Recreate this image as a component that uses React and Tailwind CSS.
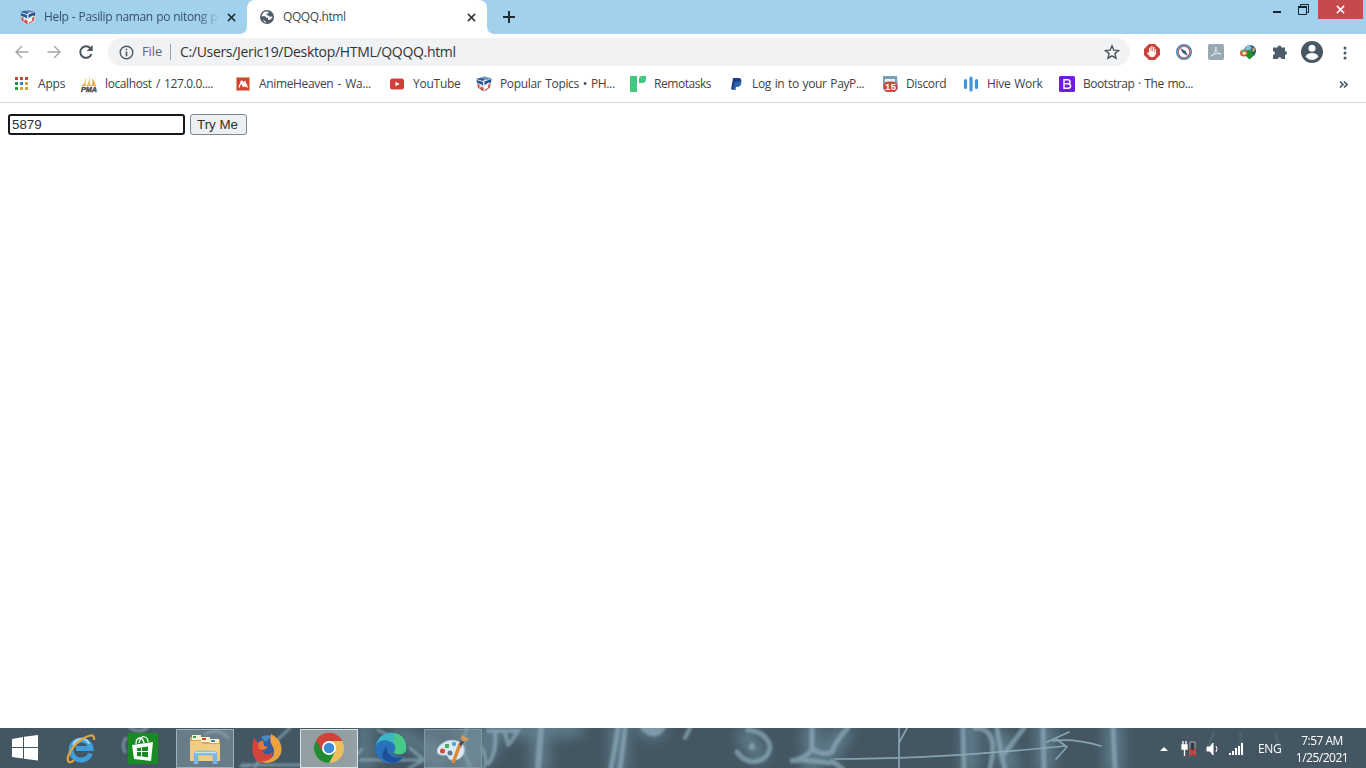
import React from "react";

const CloseX = ({ className }) => (
  <svg viewBox="0 0 10 10" className={className} fill="none" stroke="currentColor" strokeWidth="1.7">
    <path d="M1 1l8 8M9 1L1 9" />
  </svg>
);

const CubeIcon = () => (
  <svg viewBox="0 0 16 16" className="size-4">
    <path d="M0 3L9 0l7 2.500-1.500 9.500L8 16l-6-4z" fill="#dfe7ef" />
    <path d="M0 3l5-1.500 5 1.200L7 5z" fill="#31659f" />
    <path d="M8 .5l7.500 2L11 4 6 2z" fill="#6d93bd" />
    <path d="M.5 4l6.500 2v3.500L4.500 8 1 7z" fill="#2b5798" />
    <path d="M1.200 8l2.300.7V13L2 12z" fill="#cf4a3d" />
    <path d="M5 10.500l2.500 1.500v3.500L4 13z" fill="#cf4a3d" />
    <path d="M8.500 5.500L15.500 3l-.7 4-2.300-.6-4 2.600z" fill="#234f93" />
    <path d="M9 10l3-2-.5 3-3 3z" fill="#fff" />
    <path d="M12.500 8.500l2-1-.7 4-4.800 3.500v-1.500l3-1.500z" fill="#cf4a3d" />
  </svg>
);

const GlobeIcon = () => (
  <svg viewBox="0 0 16 16" className="size-4">
    <circle cx="8" cy="8" r="7" fill="#4d5b69" />
    <path d="M9.500 2.800C6 1.500 2.800 4 2.600 7.300h3.200q1.500 0 1.500 1.500H9v2h1.800l2.300-1.500c.2-.6.3-1 .2-1.800h-2.500q-1.500 0-1.500-1.300H7.600V4.500h1.900z" fill="#fff" />
    <path d="M4 10.500l3.500 3-1 .3q-2-1-2.500-3.300z" fill="#fff" />
  </svg>
);

const AppsIcon = () => (
  <svg viewBox="0 0 16 16" className="size-4">
    <path d="M1 1h3v3H1zM6 1h3v3H6zM11 1h3v3h-3z" fill="#c4453c" />
    <path d="M1 6h3v3H1zM1 11h3v3H1z" fill="#2d9148" />
    <path d="M6 6h3v3H6z" fill="#3d7fc8" />
    <path d="M11 6h3v3h-3zM6 11h3v3H6zM11 11h3v3h-3z" fill="#d9a03e" />
  </svg>
);

const PmaIcon = () => (
  <svg viewBox="0 0 16 16" className="size-4 overflow-visible">
    <path d="M1 10Q4 7 5 2v8zM5.500 10Q8.500 6 8.500 0l1 10zM10 10q2-3 1-8 3 4 4 8z" fill="#eda53f" />
    <path d="M5 3l-1 7M8.500 1L8 10M11 3l1 7" stroke="#f7d99c" strokeWidth=".8" />
    <text x="0" y="15.500" fontSize="6.500" fontWeight="bold" fontStyle="italic" fontFamily="Liberation Sans, sans-serif" fill="#4c5054" stroke="#4c5054" strokeWidth=".4" textLength="16" lengthAdjust="spacingAndGlyphs">PMA</text>
  </svg>
);

const AnimeIcon = () => (
  <svg viewBox="0 0 16 16" className="size-4">
    <path d="M1 1h14v14H1z" fill="#e5a476" />
    <path d="M2 2h12v12H2z" fill="#cf4435" />
    <path d="M4 11.500l2.300-6 2 5.500-1-6 3 6-.6-6 2.800 6.500" fill="none" stroke="#fff" strokeWidth="1.300" />
  </svg>
);

const YoutubeIcon = () => (
  <svg viewBox="0 0 16 16" className="size-4">
    <rect x="1" y="2.500" width="14" height="11" rx="2.500" fill="#d14038" />
    <path d="M6.500 5.700v4.600l4-2.300z" fill="#fff" />
  </svg>
);

const RemotasksIcon = () => (
  <svg viewBox="0 0 16 16" className="size-4">
    <path d="M0 0h7v16H0z" fill="#42c883" />
    <path d="M9 7V3q0-3 3-3h4v3q0 4-4 4z" fill="#42c883" />
  </svg>
);

const PaypalIcon = () => (
  <svg viewBox="0 0 16 16" className="size-4">
    <path d="M5 2h5c3 0 4 2 3 4.500C12.300 9 10.500 10 8 10H7l-.7 3.500H3z" fill="#253b80" />
    <path d="M12.800 5c.8 1 .6 2.500 0 3.800-.8 1.600-2.300 2.200-4 2.200H8l-.5 3H5l.6-3.500L6.500 6z" fill="#2865b0" />
  </svg>
);

const DiscordIcon = () => (
  <svg viewBox="0 0 16 16" className="size-4">
    <path d="M1 0h14l1 13-3 3H4l-3-3z" fill="#7b9fb7" />
    <path d="M3 3h10v3H3z" fill="#eef3f7" />
    <rect x="1.500" y="5.500" width="14" height="10.500" rx="5" fill="#d44538" />
    <text x="3" y="14.300" fontSize="9.500" fontWeight="bold" fontFamily="Liberation Sans, sans-serif" fill="#fff" textLength="11">15</text>
  </svg>
);

const HiveIcon = () => (
  <svg viewBox="0 0 16 16" className="size-4">
    <path d="M2.500 4.500v7M8 2v12M13.500 4.500v7" stroke="#4195d6" strokeWidth="3.200" strokeLinecap="round" />
  </svg>
);

const BootstrapIcon = () => (
  <svg viewBox="0 0 16 16" className="size-4">
    <rect width="16" height="16" rx="1.500" fill="#701be0" />
    <path d="M5 3.700h3.700q2.300 0 2.300 2 0 2-2.300 2H5h4q2.600 0 2.600 2.300T9 12.300H5z" fill="none" stroke="#fff" strokeWidth="1.400" />
  </svg>
);

const bookmarks = [
  { icon: AppsIcon, label: "Apps", width: "w-[67px]", text: "tracking-[-0.2px]" },
  { icon: PmaIcon, label: "localhost / 127.0.0....", width: "w-[154px]", text: "tracking-[-0.4px] [word-spacing:1.5px]" },
  { icon: AnimeIcon, label: "AnimeHeaven - Wa...", width: "w-[154px]", text: "tracking-[-0.35px] [word-spacing:1.5px]" },
  { icon: YoutubeIcon, label: "YouTube", width: "w-[87px]", text: "tracking-[-0.25px]" },
  { icon: CubeIcon, label: "Popular Topics • PH...", width: "w-[154px]", text: "tracking-[-0.35px] [word-spacing:1.2px]" },
  { icon: RemotasksIcon, label: "Remotasks", width: "w-[98px]", text: "tracking-[-0.45px]" },
  { icon: PaypalIcon, label: "Log in to your PayP...", width: "w-[154px]", text: "tracking-[-0.37px] [word-spacing:1px]" },
  { icon: DiscordIcon, label: "Discord", width: "w-[81px]", text: "tracking-[-0.35px]" },
  { icon: HiveIcon, label: "Hive Work", width: "w-[96px]", text: "tracking-[-0.3px] [word-spacing:1px]" },
  { icon: BootstrapIcon, label: "Bootstrap · The mo...", width: "w-[150px]", text: "tracking-[-0.45px] [word-spacing:1px]" },
];

const TabStrip = () => (
  <div className="flex h-[34px] bg-[#a2d1ed]">
    <div className="flex w-[247px] items-center pl-5">
      <CubeIcon />
      <span className="ml-2 w-[175px] overflow-hidden whitespace-nowrap text-xs tracking-[-0.35px] text-[#34506b] [mask-image:linear-gradient(to_right,#000_88%,transparent)] [word-spacing:0.5px]">
        Help - Pasilip naman po nitong pr
      </span>
      <CloseX className="ml-2 size-[9px] text-[#25323d]" />
    </div>
    <div className="relative flex w-[240px] items-center rounded-t-lg bg-white pl-3">
      <svg viewBox="0 0 8 8" className="absolute -left-2 bottom-0 size-2"><path d="M8 0v8H0q8 0 8-8" fill="#fff" /></svg>
      <svg viewBox="0 0 8 8" className="absolute -right-2 bottom-0 size-2"><path d="M0 0v8h8q-8 0-8-8" fill="#fff" /></svg>
      <GlobeIcon />
      <span className="ml-2 w-[184px] text-xs tracking-[-0.4px] text-[#44484c]">QQQQ.html</span>
      <CloseX className="size-[9px] text-[#303438]" />
    </div>
    <svg viewBox="0 0 12 12" className="mt-[11px] ml-4 size-3" stroke="#202c35" strokeWidth="2"><path d="M6 0v12M0 6h12" /></svg>
    <div className="ml-auto flex">
      <div className="mt-[11px] mr-[17px] h-0.5 w-2 bg-[#17222b]" />
      <svg viewBox="0 0 11 11" className="mt-1 mr-[9px] size-[11px]" fill="none" stroke="#17222b">
        <path d="M2.500 2.500v-2h8v8h-2M.5 3.500h8v7h-8z" /><path d="M0 3h9" strokeWidth="2" />
      </svg>
      <div className="mr-[3px] flex h-[19px] w-[45px] items-center justify-center bg-[#c44a4b] text-white">
        <CloseX className="size-[9px]" />
      </div>
    </div>
  </div>
);

const Toolbar = () => (
  <div className="flex h-9 items-center pl-[14px]">
    <svg viewBox="0 0 16 16" className="size-4" fill="none" stroke="#a2a5a9" strokeWidth="1.400"><path d="M14.500 8H2M8 2L2 8l6 6" /></svg>
    <svg viewBox="0 0 16 16" className="ml-4 size-4" fill="none" stroke="#a2a5a9" strokeWidth="1.400"><path d="M1.500 8H14M8 2l6 6-6 6" /></svg>
    <svg viewBox="0 0 16 16" className="ml-4 size-4" fill="none" stroke="#4d565e" strokeWidth="2">
      <path d="M13.500 10A5.800 5.800 0 1 1 12.500 4.300" /><path d="M14.700 1v6h-6z" fill="#4d565e" stroke="none" />
    </svg>
    <div className="ml-[14px] flex h-7 w-[1022px] items-center rounded-full bg-[#f0f2f4] pr-[10px] pl-[11px]">
      <svg viewBox="0 0 16 16" className="size-[15px]" fill="none" stroke="#505a63" strokeWidth="1.500">
        <circle cx="8" cy="8" r="6.700" /><path d="M8 7v5M8 4v1.700" strokeWidth="1.700" />
      </svg>
      <span className="ml-2 w-[28px] text-[13px] tracking-[-0.1px] text-[#62686e]">File</span>
      <div className="h-4 w-px bg-[#9da2a6]" />
      <span className="ml-[9px] text-sm tracking-[-0.32px] text-[#303439]">C:/Users/Jeric19/Desktop/HTML/QQQQ.html</span>
      <svg viewBox="0 0 16 16" className="ml-auto size-4" fill="none" stroke="#4d565e" strokeWidth="1.400">
        <path d="M8 1.800l1.800 4.300 4.700.4-3.600 3.100 1.100 4.600L8 11.800l-4 2.400 1.100-4.600-3.600-3.100 4.700-.4z" />
      </svg>
    </div>
    <div className="ml-[14px] flex items-center gap-4">
      <svg viewBox="0 0 16 16" className="size-4 shrink-0">
        <path d="M5 0h6l5 5v6l-5 5H5l-5-5V5z" fill="#c9423b" />
        <path d="M5 5v4L4 8l-1 1 3 4h4l2-3V5h-1v3h-.6V3H9v4h-.6V2H7.300v5h-.6V3.500H5.500z" fill="#fff3ec" />
      </svg>
      <svg viewBox="0 0 16 16" className="size-4 shrink-0">
        <circle cx="8" cy="8" r="7.200" fill="#fff" stroke="#4586c0" strokeWidth="1.600" />
        <circle cx="8" cy="8" r="5.800" fill="none" stroke="#b8595c" strokeWidth="1.200" />
        <path d="M4 4l5.500 3L12 12 6.800 9z" fill="#425875" />
      </svg>
      <svg viewBox="0 0 16 16" className="size-4 shrink-0">
        <rect width="16" height="16" rx="2" fill="#99a9b3" />
        <path d="M3 12c3-1 5-4 5-9-1 3 1 6 5 7-3-1-6-.5-10 2z" fill="none" stroke="#e5ebef" strokeWidth="1" />
      </svg>
      <svg viewBox="0 0 16 16" className="size-4 shrink-0">
        <circle cx="10" cy="7" r="6" fill="#294f74" />
        <path d="M6 2l4-1 2 3-3 3-4-1z" fill="#83bdd8" />
        <ellipse cx="4" cy="9" rx="4" ry="3.500" fill="#d35a38" />
        <ellipse cx="3.500" cy="7.500" rx="2.700" ry="1.500" fill="#5fae6b" />
        <ellipse cx="4.300" cy="9.300" rx="2" ry="1.500" fill="#f2e6b9" />
        <path d="M7.500 6h4.500v4h3.500L9.500 15.500 5 11h2.500z" fill="#218f2b" />
        <path d="M13 3l2 2-1 3-2-1z" fill="#c4a959" />
      </svg>
      <svg viewBox="0 0 16 16" className="size-4 shrink-0">
        <path d="M1 3.500h4.500a2 2 0 1 1 4 0H13V7a2 2 0 1 1 0 4v4H9.500a1.800 1.800 0 0 0-3.600 0H1v-4a1.900 1.900 0 0 0 0-3.800z" fill="#4d5d6b" />
      </svg>
    </div>
    <svg viewBox="0 0 22 22" className="ml-[13px] size-[22px] shrink-0">
      <circle cx="11" cy="11" r="11" fill="#475764" />
      <circle cx="11" cy="7.200" r="3.500" fill="#fff" />
      <path d="M4.500 15.500c1-2.400 4-3.500 6.500-3.500s5.500 1.100 6.500 3.500c-3.500 4.500-9.500 4.500-13 0z" fill="#fff" />
    </svg>
    <svg viewBox="0 0 4 14" className="-mb-px ml-[20px] h-[14px] w-1" fill="#475764">
      <circle cx="2" cy="2" r="1.500" /><circle cx="2" cy="7" r="1.500" /><circle cx="2" cy="12" r="1.500" />
    </svg>
  </div>
);

const BookmarkBar = () => (
  <div className="flex h-[33px] items-center border-b border-[#d5d7da] pb-1 pl-[14px]">
    {bookmarks.map(({ icon: Icon, label, width, text }) => (
      <div key={label} className={`flex shrink-0 items-center gap-2 ${width}`}>
        <Icon />
        <span className={`whitespace-nowrap text-xs text-[#3e4246] ${text}`}>{label}</span>
      </div>
    ))}
    <svg viewBox="0 0 9 7" className="mr-[18px] ml-auto h-[7px] w-[9px]" fill="none" stroke="#475764" strokeWidth="1.600">
      <path d="M1 .5l3 3-3 3M5 .5l3 3-3 3" />
    </svg>
  </div>
);

const Chalkboard = () => (
  <svg viewBox="0 0 1366 40" className="absolute inset-0 h-10 w-full" fill="none" strokeLinecap="round">
    <defs>
      <filter id="chalk" x="-20%" y="-50%" width="140%" height="200%"><feGaussianBlur stdDeviation="1.200" /></filter>
      <filter id="dust" x="-20%" y="-50%" width="140%" height="200%"><feGaussianBlur stdDeviation="7" /></filter>
    </defs>
    <g filter="url(#dust)" stroke="#6d8e9f" strokeWidth="18" opacity=".7">
      <path d="M492 0l-4 25M505 0h70M540 0v40M619 0v40M645 0l12 2M746 8l12 18M812 0v40M830 25l12-20M970 0v40M1000 10l10 28M1045 0v40M1114 0v40" />
      <path d="M365 0v40M400 5l40 25M470 0v40" opacity=".8" />
    </g>
    {/* wide smudged strokes */}
    <g filter="url(#chalk)" stroke="#8eabba" opacity=".7">
      <path d="M488 3h30l-8 12M495 5q2 20-7 31M505 5l3 12" strokeWidth="4" />
      <path d="M482 20q6 10 2 20" strokeWidth="3" />
      <path d="M541 0l-3 40" strokeWidth="6" />
      <path d="M618 0q-3 20-7 40M625 0q-2 20-5 40" strokeWidth="5" />
      <path d="M646-2q8 9 14 0" strokeWidth="12" />
      <path d="M690 0l-5 10" strokeWidth="4" />
      <path d="M748 2q18 2 22 16c0 16-22 22-33 6" strokeWidth="5" />
      <path d="M752 18v1" strokeWidth="6" />
      <path d="M812 0v22q-7 9-22 11 18-2 40 2M848 0q-12 12-16 24-8 4-18-2M832 33l12 9" strokeWidth="5" />
      <path d="M963 0l1 40M975 0q25 0 15 40M997 0l4 25 5 20M1024 0l-20 26M1043 0l1 40M1113 0l2 40" strokeWidth="5" />
      <path d="M126 10q-5 7-1 14M130 0q10 6 17 0M205 6q14-7 23 4M241 38h8" strokeWidth="3" />
      <path d="M290 0l-18 17M242 37h58M262 25l-7 15" strokeWidth="3" />
      <path d="M357 27l5-6M360 32h60M410 20l14 12-15 8M378 2l10 5M467 0q-8 20 4 40" strokeWidth="3" />
      <path d="M1214 4l-8 20M1240 4l3 22M1275 6l7 20" strokeWidth="2" opacity=".35" />
    </g>
    <g stroke="#8eacb9" strokeWidth="1.700" opacity=".9">
      <path d="M835 31q100 0 231-13M899 0v40M907 0l-8 15M1056 11l11 8-11 12M1053 13q20-3 48 5M1047 14l22-10" />
    </g>
  </svg>
);

const apps = [
  {
    name: "ie",
    icon: (
      <svg viewBox="0 0 32 32" className="size-8">
        <path d="M25.500 21.500A10 10 0 1 1 26 16.500H11" fill="none" stroke="#3f9edb" strokeWidth="5" />
        <path d="M8 13q3-7 10-6 5 1 6 5" fill="none" stroke="#9ddcf8" strokeWidth="2" />
        <path d="M29 8c1-7-6-5-13 0C6 15 0 27 4 30q2 1 5-2" fill="none" stroke="#e5a33f" strokeWidth="2.200" />
      </svg>
    ),
  },
  {
    name: "store",
    icon: (
      <svg viewBox="0 0 30 32" className="h-8 w-[30px]">
        <path d="M0 1h30v31H0z" fill="#188b24" />
        <path d="M8 12q0-6 4-6 3 0 4 5M11 11q2-8 6-6 3 1 3 5" fill="none" stroke="#fff" strokeWidth="1.300" />
        <path d="M4 13l21-3-2 19-17-2z" fill="#fff" />
        <path d="M9 16l4-.5V19H9zM14 15.300l6-.8V19h-6zM9 20h4v4.500L9 24zM14 20h6v5.300l-6-.8z" fill="#188b24" />
      </svg>
    ),
  },
  {
    name: "explorer",
    frame: "border-[#a0b0b9] bg-[#8fa3af]/50",
    icon: (
      <svg viewBox="0 0 32 32" className="size-8">
        <path d="M1 5h9l2 3h19v20H1z" fill="#d7a75c" />
        <path d="M3 3h9v5H3zM12 5h9v5h-9zM20 7h10v4H20z" fill="#fff1cc" />
        <path d="M4 4h3v2H4z" fill="#3c9751" /><path d="M13 6h4v2h-4z" fill="#cf4639" /><path d="M22 8h4v2h-4z" fill="#398ac0" />
        <path d="M1 9h10l3 3h17v17H1z" fill="#f1cc83" />
        <path d="M7 32V23q0-2 2-2h15q2 0 2 2v9" fill="none" stroke="#78b6e5" strokeWidth="4.500" />
        <path d="M6 20.500h21" stroke="#c5e5f7" strokeWidth="1.500" />
      </svg>
    ),
  },
  {
    name: "firefox",
    icon: (
      <svg viewBox="0 0 32 32" className="size-8">
        <circle cx="16" cy="17" r="13" fill="#315d9f" />
        <path d="M10 5q4-3 10-1l-5 6z" fill="#4b8ac5" />
        <path d="M3 6l4 5 5-3 1 6 4 1-4 3-2-1q1 7 8 5l3-3-2 9-8 3C5 31-2 22 3 6z" fill="#d4463b" />
        <path d="M20 2q8 4 10 11c3 11-6 18-15 18l-5-2c7 1 13-3 13-9 1-6-6-8-3-18z" fill="#eda23d" />
        <path d="M7 11l5-3 1 6 4 1-4 3-5-1z" fill="#e37b36" />
      </svg>
    ),
  },
  {
    name: "chrome",
    frame: "border-[#dce2e5] bg-[#a5b0b3]/80",
    icon: (
      <svg viewBox="0 0 32 32" className="size-8">
        <circle cx="16" cy="16" r="15" fill="#edc05c" />
        <path d="M16 16L3 8.500A15 15 0 0 0 16 31l6-11z" fill="#218b34" />
        <path d="M3 8.500A15 15 0 0 1 29.500 9H16l-6.500 10z" fill="#cf4338" />
        <circle cx="16" cy="16" r="7" fill="#fff" /><circle cx="16" cy="16" r="5.300" fill="#3b8ed4" />
      </svg>
    ),
  },
  {
    name: "edge",
    icon: (
      <svg viewBox="0 0 32 32" className="size-8">
        <circle cx="16" cy="16" r="15.500" fill="#2873ba" />
        <path d="M1 13C4 2 15-2 24 3c7 4 9 12 6 17-3 3-8 4-12 1 3-3 4-9-2-11C10 7 4 8 1 13z" fill="#3ab7c5" />
        <path d="M20 1c10 2 13 13 10 19-3 3-8 4-12 1 3-3 4-7 0-10z" fill="#48ca86" />
        <path d="M12 14c-1 10 7 13 16 11q-8 9-17 4-8-5 1-15z" fill="#204f98" />
        <path d="M16 16q1 6 8 6.500 4 0 7-2.500l-1 4q-13 3-14-8z" fill="#485d68" />
      </svg>
    ),
  },
  {
    name: "paint",
    frame: "border-[#8097a4] bg-[#8099a6]/50",
    icon: (
      <svg viewBox="0 0 32 32" className="size-8">
        <path d="M6 11C13 6 24 8 27 15c2 10-6 14-13 13-4-1-2-4-5-5-5 1-10-1-9-5q1-4 6-7z" fill="#dceaf3" stroke="#a6c6dc" />
        <circle cx="5.500" cy="19" r="2.500" fill="#cf4e3c" /><path d="M8 12h4v4H8z" fill="#4fa967" />
        <circle cx="17" cy="12" r="2.200" fill="#55a6d7" /><circle cx="13" cy="21" r="2.500" fill="#5d7890" />
        <circle cx="23" cy="14" r="2" fill="#8b72a8" />
        <path d="M23 12l-7 19" stroke="#dc8a35" strokeWidth="3.500" />
        <path d="M26 9l-3 4" stroke="#4b4f55" strokeWidth="3" />
        <path d="M25 3q3 2 7 4-2 3-7 2-2-3 0-6z" fill="#d69a54" />
      </svg>
    ),
  },
];

const Taskbar = () => (
  <div className="relative h-10 overflow-hidden bg-[#435661] text-white">
    <Chalkboard />
    <div className="relative flex h-10 items-center">
      <svg viewBox="0 0 26 26" className="ml-3 size-[26px]" fill="#fff">
        <path d="M0 4l11-2v10H0zM12 1.800L26 0v12H12zM0 13h11v10.500L0 22zM12 13h14v12.500L12 23.700z" />
      </svg>
      <div className="ml-[14px] flex gap-1">
        {apps.map((app) => (
          <div key={app.name} className={`flex h-[39px] w-[58px] items-center justify-center border ${app.frame || "border-transparent"}`}>
            {app.icon}
          </div>
        ))}
      </div>
      <div className="ml-auto flex items-center pt-0.5">
        <svg viewBox="0 0 8 4" className="h-1 w-2" fill="#fff"><path d="M0 4l4-4 4 4z" /></svg>
        <svg viewBox="0 0 16 16" className="ml-[13px] size-4">
          <path d="M2 0v4M5 0v4M1 4h5v4H1zM3.500 8v7" fill="#fff" stroke="#fff" strokeWidth="1.300" />
          <path d="M9 1h5v11H9z" fill="#303a40" stroke="#a7b2b9" />
          <path d="M8 8l7 7M15 8l-7 7" stroke="#c0413e" strokeWidth="2.600" />
        </svg>
        <svg viewBox="0 0 14 14" className="ml-[9px] size-[14px]" fill="none" stroke="#fff">
          <path d="M1 5h3l3-4v12L4 9H1z" fill="#fff" /><path d="M10 4q2 3 0 6" />
        </svg>
        <svg viewBox="0 0 15 12" className="ml-[9px] h-3 w-[15px]" fill="#fff">
          <path d="M0 10h2v2H0zM3 8h2v4H3zM6 5h2v7H6zM9 3h2v9H9zM12 0h2v12h-2z" />
        </svg>
        <span className="ml-[14px] w-6 text-xs tracking-[-0.4px]">ENG</span>
        <div className="mr-[16px] ml-[12px] w-[56px] text-center text-xs leading-[17px] tracking-[-0.5px] whitespace-nowrap">
          <div>7:57 AM</div>
          <div>1/25/2021</div>
        </div>
      </div>
    </div>
  </div>
);

export default function App() {
  return (
    <div className="flex h-screen w-full flex-col overflow-hidden bg-white font-['Open_Sans',sans-serif]">
      <TabStrip />
      <Toolbar />
      <BookmarkBar />
      <main className="flex flex-1 items-start gap-[5px] px-2 pt-[11px] font-['Liberation_Sans',sans-serif] text-[13.333px] leading-[17px]">
        <input
          defaultValue="5879"
          className="h-[21px] w-[177px] rounded-[3px] border-2 border-[#15181c] bg-white px-0.5 text-[#303030] outline-none"
        />
        <button className="h-[21px] w-[57px] rounded-[3px] border border-[#788894] bg-[#edf0f3] pr-0.5 text-[#303030]">Try Me</button>
      </main>
      <Taskbar />
    </div>
  );
}
